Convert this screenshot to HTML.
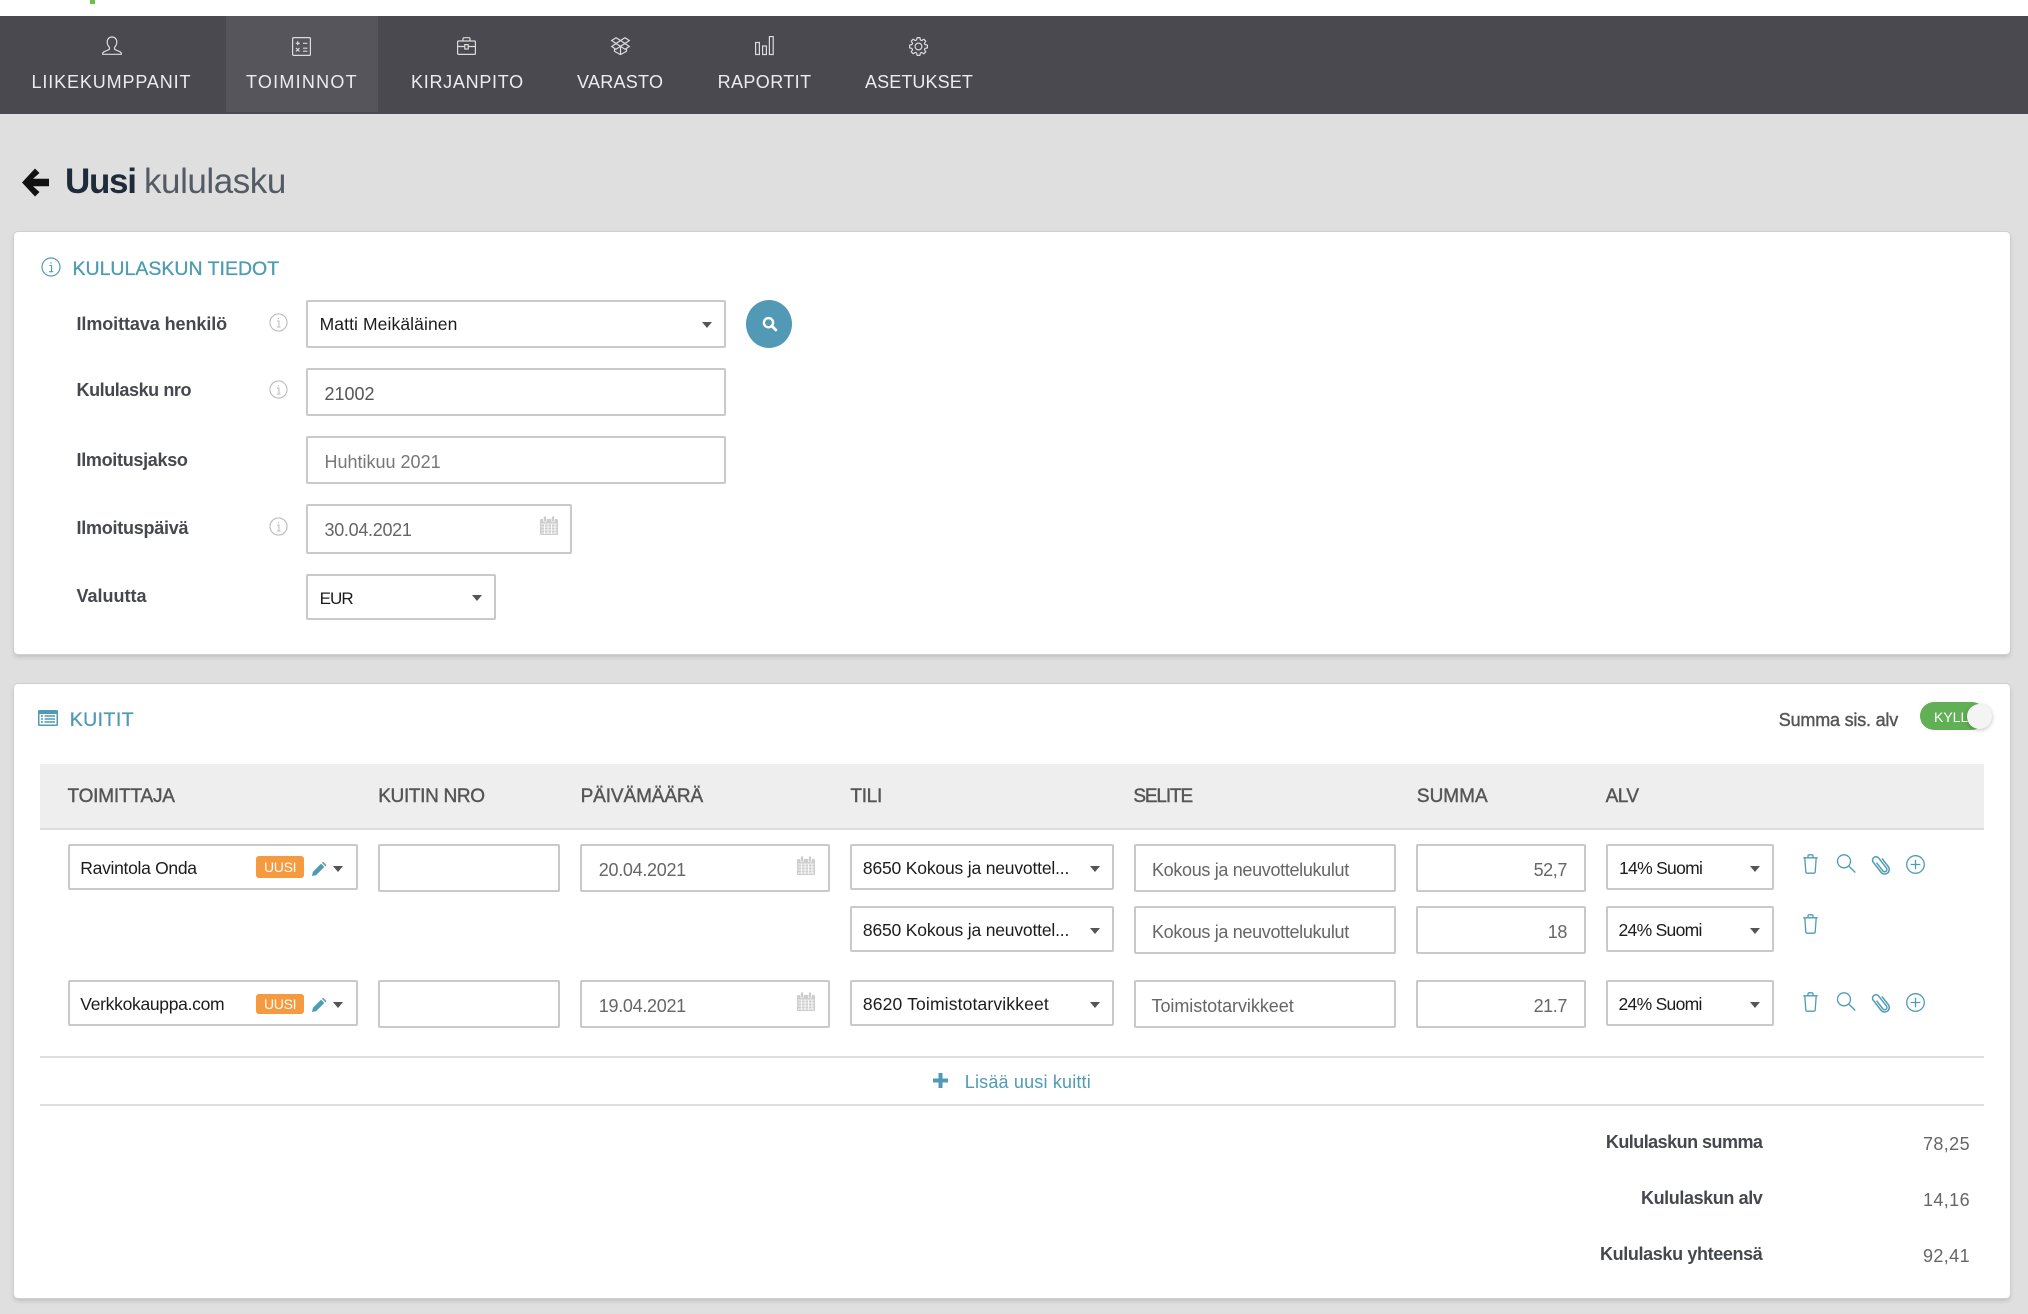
<!DOCTYPE html>
<html lang="fi">
<head>
<meta charset="utf-8">
<title>Uusi kululasku</title>
<style>
html,body{margin:0;padding:0;background:#dfdfdf;}
body{width:2028px;height:1314px;overflow:hidden;position:relative;font-family:"Liberation Sans",sans-serif;color:#444;}
.t{position:absolute;white-space:nowrap;line-height:24px;font-size:18px;}
.top{position:absolute;left:0;top:0;width:2028px;height:16px;background:#fff;}
.nav{position:absolute;left:0;top:16px;width:2028px;height:98px;background:#49494f;}
.act{position:absolute;left:226px;top:16px;width:152px;height:96px;background:#56555c;}
.n{color:#ececec;top:69.6px;font-size:18px;}
.panel{position:absolute;background:#fff;border-radius:4px;box-shadow:0 0 0 1px #cfcfcf,0 3px 5px rgba(0,0,0,.14);}
.box{position:absolute;background:#fff;border:2px solid #c9c9c9;border-radius:2px;box-sizing:border-box;}
.car{position:absolute;width:0;height:0;border-left:5.5px solid transparent;border-right:5.5px solid transparent;border-top:6px solid #555;}
.lbl{font-weight:bold;color:#45484d;left:76.5px;}
.h2{color:#4f9bb5;font-size:19.5px;-webkit-text-stroke:.3px #4f9bb5;}
.th{color:#555;font-size:19px;top:785px;-webkit-text-stroke:.4px #555;}
.sel{color:#1c1c1c;font-size:17.5px;}
.inp{color:#666;font-size:18px;}
.tot{font-weight:bold;color:#45484d;}
.badge{position:absolute;left:256px;width:48px;background:#f59a3e;border-radius:3px;}
.bt{color:#fff;font-size:14px;left:264px;letter-spacing:-.3px;}
.line{position:absolute;left:40px;width:1944px;height:2px;background:#dedede;}
svg{position:absolute;overflow:visible;}
.ic{fill:none;stroke:#4f9bb5;stroke-width:1.3;}
.ni{fill:none;stroke:#dcdcdc;stroke-width:1.2;}
</style>
</head>
<body>
<svg width="0" height="0" style="left:0;top:0">
<defs>
<symbol id="cal" viewBox="0 0 18 19" overflow="visible">
<rect x="0" y="3" width="18" height="16" rx="1" fill="#cdcdcd"/>
<path d="M1 8h16M1 11h16M1 14h16M1 17h16M4.5 8v10M8 8v10M11.500 8v10M15 8v10" stroke="#fff" stroke-width=".8" fill="none"/>
<rect x="3.500" y="0" width="3" height="6" rx="1.500" fill="#cdcdcd" stroke="#fff" stroke-width=".6"/>
<rect x="11.500" y="0" width="3" height="6" rx="1.500" fill="#cdcdcd" stroke="#fff" stroke-width=".6"/>
</symbol>
<symbol id="trash" viewBox="0 0 15 20" overflow="visible">
<path class="ic" d="M.3 3.800h14.400M5 3.800V1.900q0-1.100 1.100-1.100h2.800q1.100 0 1.100 1.100v1.900M1.800 3.800l1 14.200q.1 1.200 1.200 1.200h7q1.100 0 1.200-1.200l1-14.200"/>
</symbol>
<symbol id="srch" viewBox="0 0 19 19" overflow="visible">
<circle class="ic" cx="7" cy="7.300" r="6.500"/><path class="ic" d="M11.700 12l6.600 6.500"/>
</symbol>
<symbol id="clip" viewBox="0 0 18 20" overflow="visible">
<path class="ic" transform="rotate(-38 9 10) translate(-1.200 -1.500) scale(1.150)" d="M7 6v9a2 2 0 0 0 4 0V4a3 3 0 0 0-6 0v11a4 4 0 0 0 8 0V6"/>
</symbol>
<symbol id="plus" viewBox="0 0 19 19" overflow="visible">
<circle class="ic" cx="9.500" cy="9.500" r="8.800"/><path class="ic" d="M9.500 4.700v9.600M4.700 9.500h9.600"/>
</symbol>
<symbol id="pen" viewBox="0 0 15 14" overflow="visible">
<path fill="#4f9bb5" d="M0 14l.9-4.200L9 1.700l3.300 3.300L4.200 13.100zM10 .8l.5-.5q.6-.5 1.200 0l2.200 2.200q.5.600 0 1.200l-.6.500z"/>
</symbol>
<symbol id="info" viewBox="0 0 20 20" overflow="visible">
<circle cx="10" cy="10" r="9" fill="none" stroke="currentColor" stroke-width="1.200"/>
<path d="M8.500 8.500h2v6M8 14.700h4.200M10 5.200v1.400" fill="none" stroke="currentColor" stroke-width="1.100"/>
</symbol>
</defs>
</svg>

<div class="top"></div>
<div style="position:absolute;left:90px;top:0;width:5px;height:4px;background:#6cc04a"></div>

<nav>
<div class="nav"></div>
<div class="act"></div>
<svg style="left:102px;top:36px" width="20" height="20" viewBox="0 0 20 20"><path class="ni" d="M10 1C7 1 5.200 3.200 5.200 6c0 2.200.9 4 2.200 5.200v2.200l-5.200 2.300C1.300 16.100.7 16.600.7 17.500v.8h18.600v-.8c0-.9-.6-1.400-1.500-1.800l-5.200-2.300v-2.200c1.300-1.200 2.200-3 2.200-5.200C14.800 3.200 13 1 10 1z"/></svg>
<span class="t n" style="left:31.500px;letter-spacing:.87px">LIIKEKUMPPANIT</span>
<svg style="left:292px;top:36.500px" width="19" height="19" viewBox="0 0 19 19"><rect class="ni" x=".6" y=".6" width="17.800" height="17.800" rx="1"/><path class="ni" d="M3.800 6.300h4M5.800 4.300v4M11 6.300h4.400M4 11l3.500 3.500M7.500 11L4 14.500M11 11.200h4.400M11 14.200h4.400"/></svg>
<span class="t n" style="left:246px;letter-spacing:1.25px">TOIMINNOT</span>
<svg style="left:457px;top:37px" width="19" height="18" viewBox="0 0 19 18"><rect class="ni" x=".6" y="4" width="17.800" height="13.400" rx="1"/><path class="ni" d="M6 4V1.800Q6 .7 7 .7h5q1 0 1 1.100V4M.6 9.500h7M11.400 9.500h7"/><rect class="ni" x="7.800" y="7.600" width="3.400" height="4.400"/></svg>
<span class="t n" style="left:411px;letter-spacing:.72px">KIRJANPITO</span>
<svg style="left:611px;top:37px" width="19" height="18" viewBox="0 0 19 18"><path class="ni" d="M5 .7L.7 3.500l4.300 3-4.300 3L5 12.300l4.500-3 4.500 3 4.300-2.800-4.300-3 4.300-3L14 .7 9.500 3.500zM5 6.500l4.500-3 4.500 3-4.500 2.800zM3.500 11.500v2.800l6 3.300 6-3.300v-2.800M9.500 9.300v8.300"/></svg>
<span class="t n" style="left:577px;letter-spacing:.27px">VARASTO</span>
<svg style="left:755px;top:36px" width="19" height="19" viewBox="0 0 19 19"><rect class="ni" x=".6" y="6.500" width="3.800" height="12"/><rect class="ni" x="7.600" y="10" width="3.800" height="8.500"/><rect class="ni" x="14.400" y=".6" width="3.800" height="17.900"/></svg>
<span class="t n" style="left:717.600px;letter-spacing:.4px">RAPORTIT</span>
<svg style="left:909px;top:36.500px" width="19" height="19" viewBox="0 0 19 19"><g transform="translate(9.500 9.500)"><polygon class="ni" stroke-linejoin="round" points="6.540,-1.870 8.890,-1.410 8.890,1.410 6.540,1.870 5.950,3.300 7.280,5.290 5.290,7.280 3.300,5.950 1.870,6.540 1.410,8.890 -1.410,8.890 -1.870,6.540 -3.300,5.950 -5.290,7.280 -7.280,5.290 -5.950,3.300 -6.540,1.870 -8.890,1.410 -8.890,-1.410 -6.540,-1.870 -5.950,-3.300 -7.280,-5.290 -5.290,-7.280 -3.300,-5.950 -1.870,-6.540 -1.410,-8.890 1.410,-8.890 1.870,-6.540 3.300,-5.950 5.290,-7.280 7.280,-5.290 5.950,-3.300"/><circle class="ni" r="3.400"/></g></svg>
<span class="t n" style="left:865px;letter-spacing:.1px">ASETUKSET</span>
</nav>

<header>
<svg style="left:22px;top:167.500px" width="27" height="29" viewBox="0 0 27 29"><polygon fill="#111" points="0,14.500 13,0.500 17.500,5 11,10.800 27,10.800 27,18.200 11,18.200 17.500,24 13,28.500"/></svg>
<span class="t" style="left:65px;top:161.500px;line-height:40px;font-size:35px;font-weight:bold;color:#1f2a3a;letter-spacing:-1.300px">Uusi</span>
<span class="t" style="left:144px;top:161.500px;line-height:40px;font-size:35px;color:#555b64;letter-spacing:-.45px">kululasku</span>
</header>

<section>
<div class="panel" style="left:14px;top:232px;width:1996px;height:422px"></div>
<svg style="left:41px;top:257px;color:#4f9bb5" width="20" height="20"><use href="#info"/></svg>
<span class="t h2" style="left:72.500px;top:257.200px">KULULASKUN TIEDOT</span>

<span class="t lbl" style="top:312.200px;letter-spacing:-.08px">Ilmoittava henkilö</span>
<svg style="left:268.500px;top:312.500px;color:#bdbdbd" width="19" height="19" viewBox="0 0 20 20"><use href="#info" width="20" height="20"/></svg>
<div class="box" style="left:306px;top:300px;width:420px;height:48px"></div>
<span class="t sel" style="left:319.600px;top:312px;letter-spacing:.1px">Matti Meikäläinen</span>
<div class="car" style="left:701.500px;top:321.500px"></div>
<div style="position:absolute;left:746px;top:300px;width:46px;height:48px;border-radius:50%;background:#5199b5"></div>
<svg style="left:762px;top:317px" width="15" height="14" viewBox="0 0 15 14"><circle cx="6.500" cy="5.700" r="4.600" fill="none" stroke="#fff" stroke-width="2.400"/><path d="M9.800 9l4 4" stroke="#fff" stroke-width="2.800" stroke-linecap="round"/></svg>

<span class="t lbl" style="top:378.200px;letter-spacing:-.42px">Kululasku nro</span>
<svg style="left:268.500px;top:380px;color:#bdbdbd" width="19" height="19" viewBox="0 0 20 20"><use href="#info" width="20" height="20"/></svg>
<div class="box" style="left:306px;top:368px;width:420px;height:48px"></div>
<span class="t inp" style="left:324.500px;top:382px;color:#555">21002</span>

<span class="t lbl" style="top:448.200px;letter-spacing:-.3px">Ilmoitusjakso</span>
<div class="box" style="left:306px;top:436px;width:420px;height:48px"></div>
<span class="t inp" style="left:324.500px;top:450px;color:#777">Huhtikuu 2021</span>

<span class="t lbl" style="top:516.200px;letter-spacing:-.25px">Ilmoituspäivä</span>
<svg style="left:268.500px;top:516.500px;color:#bdbdbd" width="19" height="19" viewBox="0 0 20 20"><use href="#info" width="20" height="20"/></svg>
<div class="box" style="left:306px;top:504px;width:266px;height:50px"></div>
<span class="t inp" style="left:324.500px;top:518px;letter-spacing:-.3px">30.04.2021</span>
<svg style="left:540px;top:516px" width="18" height="19"><use href="#cal"/></svg>

<span class="t lbl" style="top:584.200px">Valuutta</span>
<div class="box" style="left:306px;top:574px;width:190px;height:46px"></div>
<span class="t sel" style="left:319.600px;top:586.500px;font-size:17px;letter-spacing:-.9px">EUR</span>
<div class="car" style="left:471.500px;top:595px"></div>
</section>

<section>
<div class="panel" style="left:14px;top:684px;width:1996px;height:614px"></div>
<svg style="left:38px;top:710px" width="20" height="16" viewBox="0 0 20 16"><rect width="20" height="16" rx="1.500" fill="#4f9bb5"/><rect x="1.500" y="4" width="17" height="10.500" fill="#fff"/><path d="M3 6h2M6.500 6H17M3 9h2M6.500 9H17M3 12h2M6.500 12H17" stroke="#4f9bb5" stroke-width="1.500"/></svg>
<span class="t h2" style="left:69.700px;top:707.500px;letter-spacing:.45px">KUITIT</span>
<span class="t" style="left:1778.800px;top:708px;color:#555;letter-spacing:-.2px;-webkit-text-stroke:.4px #555">Summa sis. alv</span>
<div style="position:absolute;left:1920px;top:702px;width:66px;height:28px;border-radius:14px;background:#62b055"></div>
<span class="t" style="left:1934px;top:705px;font-size:14px;color:#fff">KYLLÄ</span>
<div style="position:absolute;left:1967px;top:704px;width:25px;height:25px;border-radius:50%;background:#f4f4f4;box-shadow:0 1px 4px rgba(0,0,0,.25)"></div>

<div style="position:absolute;left:40px;top:764px;width:1944px;height:66px;background:#eee;border-bottom:2px solid #ddd;box-sizing:border-box"></div>
<span class="t th" style="left:67.500px;letter-spacing:-.18px">TOIMITTAJA</span>
<span class="t th" style="left:378.200px;letter-spacing:-.32px">KUITIN NRO</span>
<span class="t th" style="left:580.600px;letter-spacing:-.1px">PÄIVÄMÄÄRÄ</span>
<span class="t th" style="left:850.400px;letter-spacing:-.3px">TILI</span>
<span class="t th" style="left:1133.400px;letter-spacing:-1.150px">SELITE</span>
<span class="t th" style="left:1416.900px">SUMMA</span>
<span class="t th" style="left:1605.600px;letter-spacing:-.5px">ALV</span>

<!-- rivi 1 -->
<div class="box" style="left:68px;top:844px;width:290px;height:46px"></div>
<span class="t sel" style="left:80.300px;top:856px;letter-spacing:-.3px">Ravintola Onda</span>
<div class="badge" style="top:856px;height:22px"></div>
<span class="t bt" style="top:855px">UUSI</span>
<svg style="left:312px;top:861.500px" width="15" height="14"><use href="#pen"/></svg>
<div class="car" style="left:333px;top:865.500px"></div>
<div class="box" style="left:378px;top:844px;width:182px;height:48px"></div>
<div class="box" style="left:580px;top:844px;width:250px;height:48px"></div>
<span class="t inp" style="left:598.800px;top:858px;letter-spacing:-.3px">20.04.2021</span>
<svg style="left:797px;top:856px" width="18" height="19"><use href="#cal"/></svg>
<div class="box" style="left:850px;top:844px;width:264px;height:46px"></div>
<span class="t sel" style="left:862.900px;top:856px;letter-spacing:-.18px">8650 Kokous ja neuvottel...</span>
<div class="car" style="left:1089.500px;top:865.500px"></div>
<div class="box" style="left:1134px;top:844px;width:262px;height:48px"></div>
<span class="t inp" style="left:1152px;top:858px;letter-spacing:-.33px">Kokous ja neuvottelukulut</span>
<div class="box" style="left:1416px;top:844px;width:170px;height:48px"></div>
<span class="t inp" style="right:461px;top:858px;letter-spacing:-.4px">52,7</span>
<div class="box" style="left:1606px;top:844px;width:168px;height:46px"></div>
<span class="t sel" style="left:1619px;top:856px;letter-spacing:-.7px">14% Suomi</span>
<div class="car" style="left:1750px;top:866px"></div>
<svg style="left:1803px;top:854px" width="15" height="20"><use href="#trash"/></svg>
<svg style="left:1836.500px;top:854px" width="19" height="19"><use href="#srch"/></svg>
<svg style="left:1872px;top:855px" width="18" height="20"><use href="#clip"/></svg>
<svg style="left:1906px;top:854.500px" width="19" height="19"><use href="#plus"/></svg>

<!-- rivi 2 -->
<div class="box" style="left:850px;top:906px;width:264px;height:46px"></div>
<span class="t sel" style="left:862.900px;top:918px;letter-spacing:-.18px">8650 Kokous ja neuvottel...</span>
<div class="car" style="left:1089.500px;top:927.500px"></div>
<div class="box" style="left:1134px;top:906px;width:262px;height:48px"></div>
<span class="t inp" style="left:1152px;top:920px;letter-spacing:-.33px">Kokous ja neuvottelukulut</span>
<div class="box" style="left:1416px;top:906px;width:170px;height:48px"></div>
<span class="t inp" style="right:461px;top:920px;letter-spacing:-.4px">18</span>
<div class="box" style="left:1606px;top:906px;width:168px;height:46px"></div>
<span class="t sel" style="left:1618.500px;top:918px;letter-spacing:-.7px">24% Suomi</span>
<div class="car" style="left:1750px;top:928px"></div>
<svg style="left:1803px;top:914px" width="15" height="20"><use href="#trash"/></svg>

<!-- rivi 3 -->
<div class="box" style="left:68px;top:980px;width:290px;height:46px"></div>
<span class="t sel" style="left:80.300px;top:992px;letter-spacing:-.3px">Verkkokauppa.com</span>
<div class="badge" style="top:994px;height:20px"></div>
<span class="t bt" style="top:992px">UUSI</span>
<svg style="left:312px;top:997.500px" width="15" height="14"><use href="#pen"/></svg>
<div class="car" style="left:333px;top:1001.500px"></div>
<div class="box" style="left:378px;top:980px;width:182px;height:48px"></div>
<div class="box" style="left:580px;top:980px;width:250px;height:48px"></div>
<span class="t inp" style="left:598.800px;top:994px;letter-spacing:-.3px">19.04.2021</span>
<svg style="left:797px;top:992px" width="18" height="19"><use href="#cal"/></svg>
<div class="box" style="left:850px;top:980px;width:264px;height:46px"></div>
<span class="t sel" style="left:862.900px;top:992px;letter-spacing:.15px">8620 Toimistotarvikkeet</span>
<div class="car" style="left:1089.500px;top:1001.500px"></div>
<div class="box" style="left:1134px;top:980px;width:262px;height:48px"></div>
<span class="t inp" style="left:1151.500px;top:994px;letter-spacing:-.05px">Toimistotarvikkeet</span>
<div class="box" style="left:1416px;top:980px;width:170px;height:48px"></div>
<span class="t inp" style="right:461px;top:994px;letter-spacing:-.4px">21.7</span>
<div class="box" style="left:1606px;top:980px;width:168px;height:46px"></div>
<span class="t sel" style="left:1618.500px;top:992px;letter-spacing:-.7px">24% Suomi</span>
<div class="car" style="left:1750px;top:1002px"></div>
<svg style="left:1803px;top:992.400px" width="15" height="20"><use href="#trash"/></svg>
<svg style="left:1836.500px;top:992.400px" width="19" height="19"><use href="#srch"/></svg>
<svg style="left:1872px;top:993.400px" width="18" height="20"><use href="#clip"/></svg>
<svg style="left:1906px;top:992.900px" width="19" height="19"><use href="#plus"/></svg>

<div class="line" style="top:1056px"></div>
<svg style="left:933px;top:1073px" width="15" height="15" viewBox="0 0 15 15"><path d="M7.500 0v15M0 7.500h15" stroke="#4f9bb5" stroke-width="4"/></svg>
<span class="t" style="left:964.800px;top:1069.500px;color:#4f9bb5;letter-spacing:.18px">Lisää uusi kuitti</span>
<div class="line" style="top:1104px"></div>

<span class="t tot" style="right:265.600px;top:1129.700px;letter-spacing:-.53px">Kululaskun summa</span>
<span class="t inp" style="right:58px;top:1131.700px;letter-spacing:.4px">78,25</span>
<span class="t tot" style="right:265.600px;top:1185.700px;letter-spacing:-.4px">Kululaskun alv</span>
<span class="t inp" style="right:58px;top:1187.700px;letter-spacing:.4px">14,16</span>
<span class="t tot" style="right:265.600px;top:1241.700px;letter-spacing:-.37px">Kululasku yhteensä</span>
<span class="t inp" style="right:58px;top:1243.700px;letter-spacing:.4px">92,41</span>
</section>
</body>
</html>
